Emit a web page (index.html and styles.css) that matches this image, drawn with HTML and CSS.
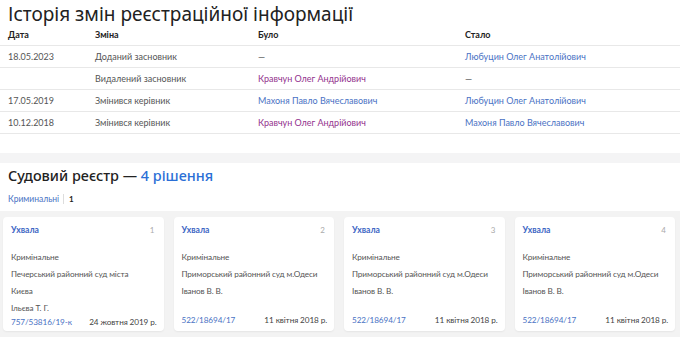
FILE: index.html
```html
<!DOCTYPE html>
<html lang="uk">
<head>
<meta charset="utf-8">
<link rel="stylesheet" href="styles.css">
</head>
<body>
<section class="history">
  <h2 class="title">Історія змін реєстраційної інформації</h2>
  <table class="tbl">
    <thead>
      <tr><th class="c1">Дата</th><th class="c2">Зміна</th><th class="c3">Було</th><th>Стало</th></tr>
    </thead>
    <tbody>
      <tr><td>18.05.2023</td><td>Доданий засновник</td><td class="muted">—</td><td><a class="blue">Любуцин Олег Анатолійович</a></td></tr>
      <tr><td></td><td>Видалений засновник</td><td><a class="purple">Кравчун Олег Андрійович</a></td><td class="muted">—</td></tr>
      <tr><td>17.05.2019</td><td>Змінився керівник</td><td><a class="blue">Махоня Павло Вячеславович</a></td><td><a class="blue">Любуцин Олег Анатолійович</a></td></tr>
      <tr><td>10.12.2018</td><td>Змінився керівник</td><td><a class="purple">Кравчун Олег Андрійович</a></td><td><a class="blue">Махоня Павло Вячеславович</a></td></tr>
    </tbody>
  </table>
</section>
<section class="court">
  <h2 class="title2">Судовий реєстр — <span class="accent">4 рішення</span></h2>
  <div class="tabs"><a class="tab">Криминальні</a><span class="sep"></span><b class="count">1</b></div>
  <div class="cards">
    <div class="card">
      <div class="card-head"><a class="kind">Ухвала</a><span class="num">1</span></div>
      <div class="line">Кримінальне</div>
      <div class="line">Печерський районний суд міста<br>Києва</div>
      <div class="line">Ільєва Т. Г.</div>
      <div class="card-foot"><a class="case">757/53816/19-к</a><span>24 жовтня 2019 р.</span></div>
    </div>
    <div class="card">
      <div class="card-head"><a class="kind">Ухвала</a><span class="num">2</span></div>
      <div class="line">Кримінальне</div>
      <div class="line">Приморський районний суд м.Одеси</div>
      <div class="line">Іванов В. В.</div>
      <div class="card-foot"><a class="case">522/18694/17</a><span>11 квітня 2018 р.</span></div>
    </div>
    <div class="card">
      <div class="card-head"><a class="kind">Ухвала</a><span class="num">3</span></div>
      <div class="line">Кримінальне</div>
      <div class="line">Приморський районний суд м.Одеси</div>
      <div class="line">Іванов В. В.</div>
      <div class="card-foot"><a class="case">522/18694/17</a><span>11 квітня 2018 р.</span></div>
    </div>
    <div class="card">
      <div class="card-head"><a class="kind">Ухвала</a><span class="num">4</span></div>
      <div class="line">Кримінальне</div>
      <div class="line">Приморський районний суд м.Одеси</div>
      <div class="line">Іванов В. В.</div>
      <div class="card-foot"><a class="case">522/18694/17</a><span>11 квітня 2018 р.</span></div>
    </div>
  </div>
</section>
<div class="bottom"></div>
</body>
</html>
```
FILE: styles.css
```css
* { box-sizing: border-box; }
html, body { margin: 0; padding: 0; }
body {
  background: #f4f4f5;
  font-family: "Lato", "Noto Sans", sans-serif;
  color: #333;
  width: 680px;
  overflow: hidden;
}
.history {
  background: #fff;
  padding: 3px 0 20px 0;
  height: 153px;
}
.title {
  margin: 0 0 0 8px;
  font-family: "Noto Sans", sans-serif;
  font-size: 19px;
  font-weight: 400;
  color: #222;
  line-height: 22px;
}
.tbl {
  width: 100%;
  border-collapse: collapse;
  font-size: 9px;
  margin-top: 0;
}
.tbl th {
  text-align: left;
  font-weight: 700;
  color: #222;
  height: 20px;
  padding: 0;
  border-bottom: 1px solid #e8e8e8;
  vertical-align: middle;
}
.tbl td {
  height: 22px;
  padding: 0;
  border-bottom: 1px solid #e8e8e8;
  color: #555;
  vertical-align: middle;
}
.tbl th:first-child, .tbl td:first-child { padding-left: 8px; }
.c1 { width: 95px; }
.c2 { width: 163px; }
.c3 { width: 207px; }
.muted { color: #888; }
.blue { color: #4a72c4; }
.purple { color: #93328e; }
.court {
  background: #fff;
  margin-top: 10px;
  padding-top: 2px;
  height: 176px;
}
.title2 {
  margin: 0 0 0 8px;
  font-family: "Noto Sans", sans-serif;
  font-size: 14.4px;
  font-weight: 500;
  color: #222;
  line-height: 22px;
}
.accent { color: #2a6fd6; }
.tabs {
  display: flex;
  align-items: center;
  margin: 5px 0 0 8px;
  font-size: 8.5px;
  height: 14px;
}
.tab { color: #4a72c4; }
.sep {
  width: 1px;
  height: 10px;
  background: #ddd;
  margin: 0 5px 0 4px;
}
.count { color: #222; font-size: 8px; }
.cards {
  display: grid;
  grid-template-columns: repeat(4, 1fr);
  gap: 10px;
  background: #f3f3f3;
  padding: 6px 5px 6px 3px;
  margin-top: 5px;
}
.card {
  background: #fff;
  border-radius: 4px;
  box-shadow: 0 1px 2px rgba(0,0,0,0.06);
  padding: 8px 7px 6px 8px;
  font-size: 8.2px;
  letter-spacing: -0.1px;
  color: #555;
  height: 114px;
  display: flex;
  flex-direction: column;
}
.card-head {
  display: flex;
  justify-content: space-between;
  align-items: center;
  margin-bottom: 14px;
  font-size: 8.6px;
  letter-spacing: 0;
}
.kind { color: #3d66c4; font-weight: 700; }
.num { color: #aaa; font-size: 8px; margin-right: 2px; }
.line { line-height: 17px; }
.card-foot {
  margin-top: auto;
  display: flex;
  justify-content: space-between;
  color: #444;
}
.case { color: #4a72c4; }
.bottom { height: 16px; background: #fff; }
```
